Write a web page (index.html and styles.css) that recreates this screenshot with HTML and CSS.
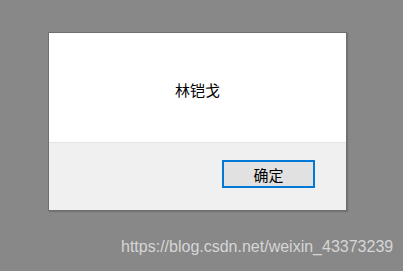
FILE: index.html
```html
<!DOCTYPE html>
<html>
<head>
<meta charset="utf-8">
<link rel="stylesheet" href="styles.css">
</head>
<body>
<div class="dialog">
  <div class="content">
    <span class="message">林铠戈</span>
  </div>
  <div class="footer">
    <button class="btn">确定</button>
  </div>
</div>
<div class="watermark">https://blog.csdn.net/weixin_43373239</div>
</body>
</html>
```
FILE: styles.css
```css
html, body {
  margin: 0;
  padding: 0;
}
body {
  background: #888888;
  width: 403px;
  height: 271px;
  overflow: hidden;
  font-family: "Noto Sans CJK SC", "Microsoft YaHei", sans-serif;
}
.dialog {
  margin: 32px 0 0 48px;
  width: 297px;
  border: 1px solid #6f6f6f;
  background: #ffffff;
  box-shadow: 1px 1px 1px rgba(0,0,0,0.15);
}
.content {
  height: 109px;
  display: flex;
  align-items: center;
  justify-content: center;
  border-bottom: 1px solid #e3e3e3;
}
.message {
  font-size: 15px;
  color: #000;
  line-height: 1;
  margin-top: 3px;
}
.footer {
  background: #f0f0f0;
  height: 67px;
  display: flex;
  justify-content: flex-end;
  align-items: flex-start;
  padding-right: 31px;
  box-sizing: border-box;
  padding-top: 17px;
}
.btn {
  width: 93px;
  height: 28px;
  border: 2px solid #0078d7;
  background: #e1e1e1;
  font-family: "Noto Sans CJK SC", sans-serif;
  font-size: 15px;
  color: #000;
  padding: 0;
  margin: 0;
  line-height: 1;
}
.watermark {
  margin: 27px 0 0 121px;
  font-family: "Liberation Sans", Arial, sans-serif;
  font-size: 16px;
  color: #d6d6d6;
  line-height: 18px;
  white-space: nowrap;
}
```
